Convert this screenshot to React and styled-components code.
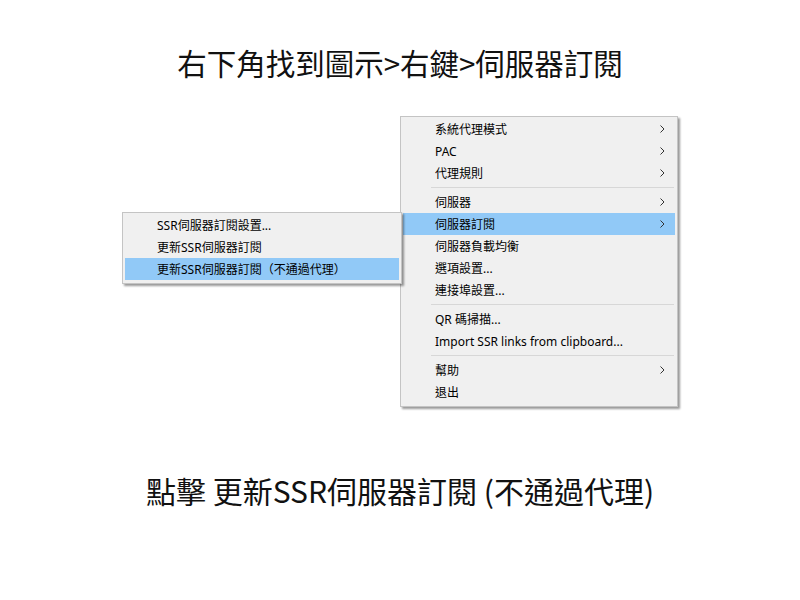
import styled, { createGlobalStyle } from "styled-components";

const GlobalStyle = createGlobalStyle`
  body {
    margin: 0;
    background: #ffffff;
    font-family: "Noto Sans", "Noto Sans CJK TC", sans-serif;
  }
`;

const mainItems = [
  { label: "系統代理模式", sub: true },
  { label: "PAC", sub: true },
  { label: "代理規則", sub: true },
  { sep: true },
  { label: "伺服器", sub: true },
  { label: "伺服器訂閱", sub: true, active: true },
  { label: "伺服器負載均衡" },
  { label: "選項設置..." },
  { label: "連接埠設置..." },
  { sep: true },
  { label: "QR 碼掃描..." },
  { label: "Import SSR links from clipboard..." },
  { sep: true },
  { label: "幫助", sub: true },
  { label: "退出" },
];

const subItems = [
  { label: "SSR伺服器訂閱設置..." },
  { label: "更新SSR伺服器訂閱" },
  { label: "更新SSR伺服器訂閱（不通過代理）", active: true },
];

function Chevron() {
  return (
    <svg width="5" height="8" viewBox="0 0 5 8">
      <polyline
        points="0.5,0.5 4,4 0.5,7.5"
        fill="none"
        stroke="#333"
        strokeWidth="1"
      />
    </svg>
  );
}

function Menu({ items, width, offset }) {
  return (
    <MenuBox $width={width} $offset={offset}>
      {items.map((item, i) =>
        item.sep ? (
          <Separator key={i} />
        ) : (
          <Item key={i} $active={item.active}>
            <span>{item.label}</span>
            {item.sub && (
              <Arrow>
                <Chevron />
              </Arrow>
            )}
          </Item>
        )
      )}
    </MenuBox>
  );
}

export default function App() {
  return (
    <Page>
      <GlobalStyle />
      <Heading>右下角找到圖示&gt;右鍵&gt;伺服器訂閱</Heading>
      <Stage>
        <Menu items={subItems} width={280} offset={96} />
        <Menu items={mainItems} width={278} offset={0} />
      </Stage>
      <Caption>點擊 更新SSR伺服器訂閱 (不通過代理)</Caption>
    </Page>
  );
}

const Page = styled.div`
  width: 800px;
  height: 600px;
  display: flex;
  flex-direction: column;
  align-items: center;
  overflow: hidden;
`;

const Heading = styled.h1`
  margin: 42px 0 0;
  height: 40px;
  line-height: 40px;
  font-size: 29.5px;
  font-weight: 400;
  color: #111;
  white-space: nowrap;
  font-family: "Noto Sans CJK TC", sans-serif;
`;

const Caption = styled(Heading)`
  margin-top: 63px;
  font-size: 30px;
`;

const Stage = styled.div`
  margin-top: 34px;
  display: flex;
  align-items: flex-start;
  justify-content: center;
  width: 100%;
`;

const MenuBox = styled.div`
  box-sizing: border-box;
  width: ${(p) => p.$width}px;
  margin-top: ${(p) => p.$offset}px;
  margin-right: ${(p) => (p.$offset ? -2 : 0)}px;
  position: relative;
  z-index: ${(p) => (p.$offset ? 2 : 1)};
  background: #f0f0f0;
  border: 1px solid #c4c4c4;
  padding: 1px 2px 3px;
  box-shadow: 2px 2px 2px rgba(0, 0, 0, 0.4);
  font-family: "Noto Sans", "Noto Sans CJK TC", sans-serif;
  font-size: 12px;
  color: #000;
`;

const Item = styled.div`
  height: 22px;
  display: flex;
  align-items: center;
  padding: 0 10px 0 32px;
  background: ${(p) => (p.$active ? "#91c9f7" : "transparent")};
  white-space: nowrap;
`;

const Arrow = styled.span`
  margin-left: auto;
  display: flex;
  align-items: center;
`;

const Separator = styled.div`
  height: 1px;
  margin: 3px 1px 3px 28px;
  background: #d7d7d7;
`;
